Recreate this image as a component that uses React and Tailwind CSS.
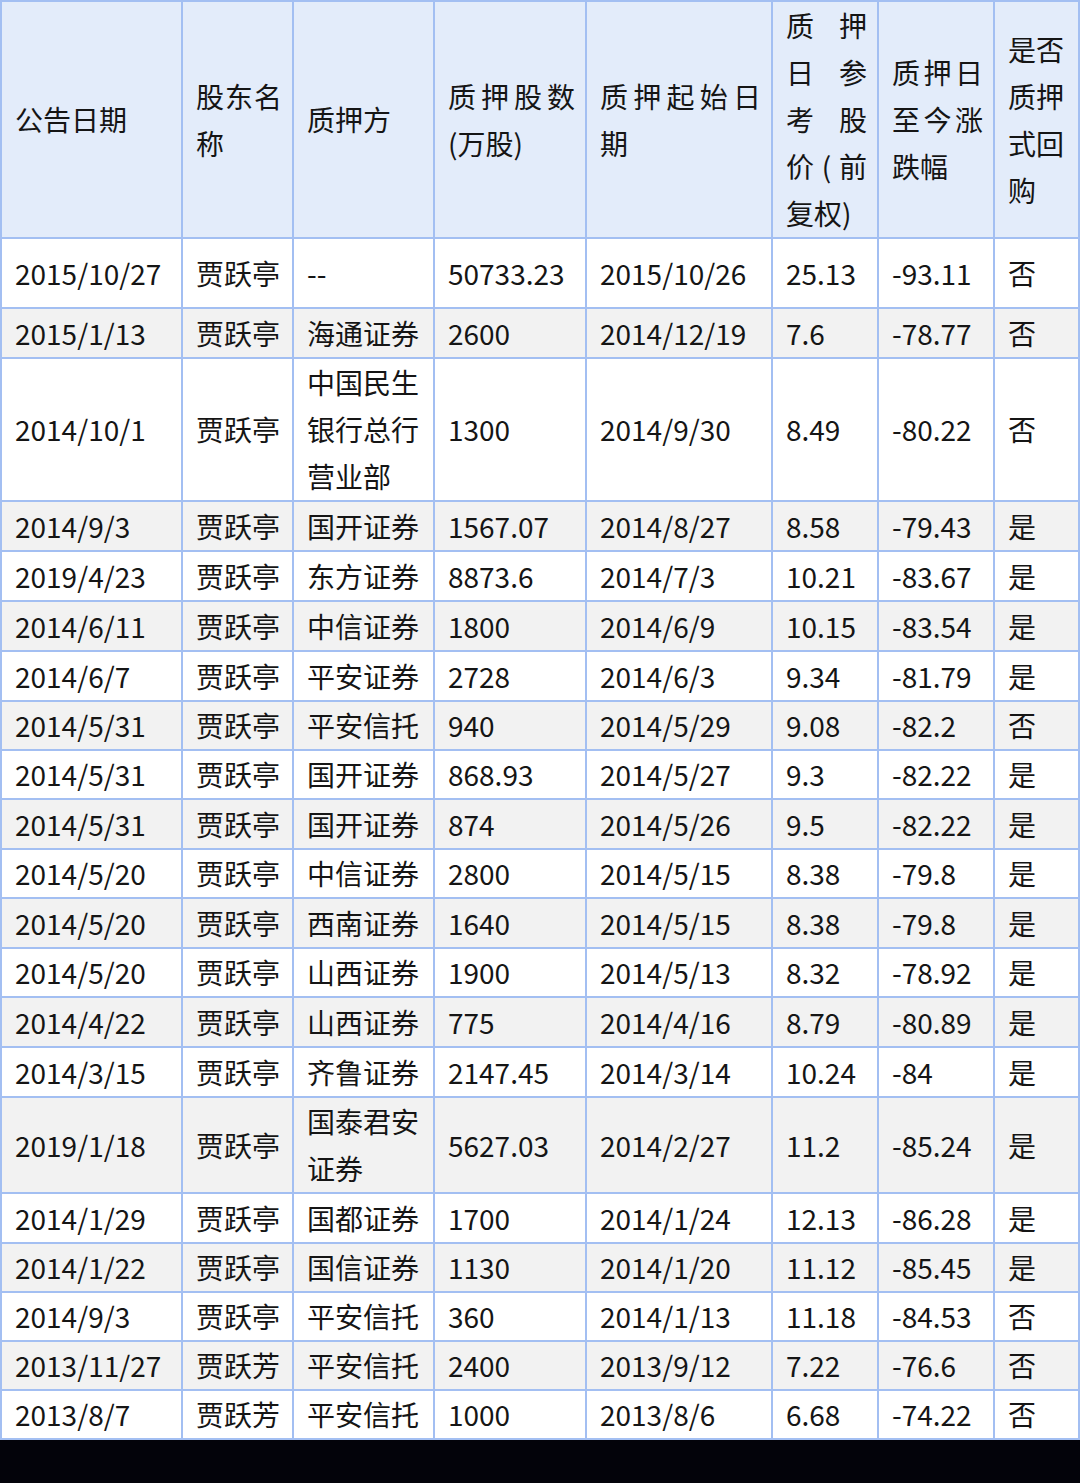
import React from "react";

const cols = [181, 111, 141, 152, 186, 106, 116, 85];

const headers = [
  "公告日期",
  "股东名称",
  "质押方",
  "质押股数(万股)",
  "质押起始日期",
  "质押日参考股价(前复权)",
  "质押日至今涨跌幅",
  "是否质押式回购",
];

const rows = [
  ["2015/10/27", "贾跃亭", "--", "50733.23", "2015/10/26", "25.13", "-93.11", "否", 70],
  ["2015/1/13", "贾跃亭", "海通证券", "2600", "2014/12/19", "7.6", "-78.77", "否", 50],
  ["2014/10/1", "贾跃亭", "中国民生银行总行营业部", "1300", "2014/9/30", "8.49", "-80.22", "否", 142],
  ["2014/9/3", "贾跃亭", "国开证券", "1567.07", "2014/8/27", "8.58", "-79.43", "是", 50],
  ["2019/4/23", "贾跃亭", "东方证券", "8873.6", "2014/7/3", "10.21", "-83.67", "是", 50],
  ["2014/6/11", "贾跃亭", "中信证券", "1800", "2014/6/9", "10.15", "-83.54", "是", 50],
  ["2014/6/7", "贾跃亭", "平安证券", "2728", "2014/6/3", "9.34", "-81.79", "是", 50],
  ["2014/5/31", "贾跃亭", "平安信托", "940", "2014/5/29", "9.08", "-82.2", "否", 49],
  ["2014/5/31", "贾跃亭", "国开证券", "868.93", "2014/5/27", "9.3", "-82.22", "是", 49],
  ["2014/5/31", "贾跃亭", "国开证券", "874", "2014/5/26", "9.5", "-82.22", "是", 50],
  ["2014/5/20", "贾跃亭", "中信证券", "2800", "2014/5/15", "8.38", "-79.8", "是", 49],
  ["2014/5/20", "贾跃亭", "西南证券", "1640", "2014/5/15", "8.38", "-79.8", "是", 50],
  ["2014/5/20", "贾跃亭", "山西证券", "1900", "2014/5/13", "8.32", "-78.92", "是", 49],
  ["2014/4/22", "贾跃亭", "山西证券", "775", "2014/4/16", "8.79", "-80.89", "是", 50],
  ["2014/3/15", "贾跃亭", "齐鲁证券", "2147.45", "2014/3/14", "10.24", "-84", "是", 50],
  ["2019/1/18", "贾跃亭", "国泰君安证券", "5627.03", "2014/2/27", "11.2", "-85.24", "是", 96],
  ["2014/1/29", "贾跃亭", "国都证券", "1700", "2014/1/24", "12.13", "-86.28", "是", 50],
  ["2014/1/22", "贾跃亭", "国信证券", "1130", "2014/1/20", "11.12", "-85.45", "是", 49],
  ["2014/9/3", "贾跃亭", "平安信托", "360", "2014/1/13", "11.18", "-84.53", "否", 49],
  ["2013/11/27", "贾跃芳", "平安信托", "2400", "2013/9/12", "7.22", "-76.6", "否", 49],
  ["2013/8/7", "贾跃芳", "平安信托", "1000", "2013/8/6", "6.68", "-74.22", "否", 49],
];

export default function App() {
  return (
    <div
      className="w-[1080px] h-[1483px] bg-[#03030a] overflow-hidden"
      style={{ fontFamily: '"Noto Sans CJK SC", "Noto Sans", sans-serif' }}
    >
      <table className="table-fixed border-collapse bg-white text-[#151515] text-[28px] leading-[47px] w-[1078px]">
        <colgroup>
          {cols.map((w, i) => (
            <col key={i} style={{ width: w }} />
          ))}
        </colgroup>
        <thead>
          <tr className="h-[237px] bg-[#e3ecfa]">
            {headers.map((h, i) => (
              <th
                key={i}
                className={`border-2 border-[#a3bff2] pl-[13px] pr-[10px] font-normal align-middle ${
                  i === 7 ? "text-left" : "text-justify"
                }`}
              >
                {h}
              </th>
            ))}
          </tr>
        </thead>
        <tbody>
          {rows.map((r, i) => (
            <tr
              key={i}
              className={i % 2 === 1 ? "bg-[#f2f2f2]" : "bg-white"}
              style={{ height: r[8] }}
            >
              {r.slice(0, 8).map((c, j) => (
                <td
                  key={j}
                  className="border-2 border-[#a3bff2] pl-[13px] pr-[10px] align-middle"
                >
                  {c}
                </td>
              ))}
            </tr>
          ))}
        </tbody>
      </table>
    </div>
  );
}
